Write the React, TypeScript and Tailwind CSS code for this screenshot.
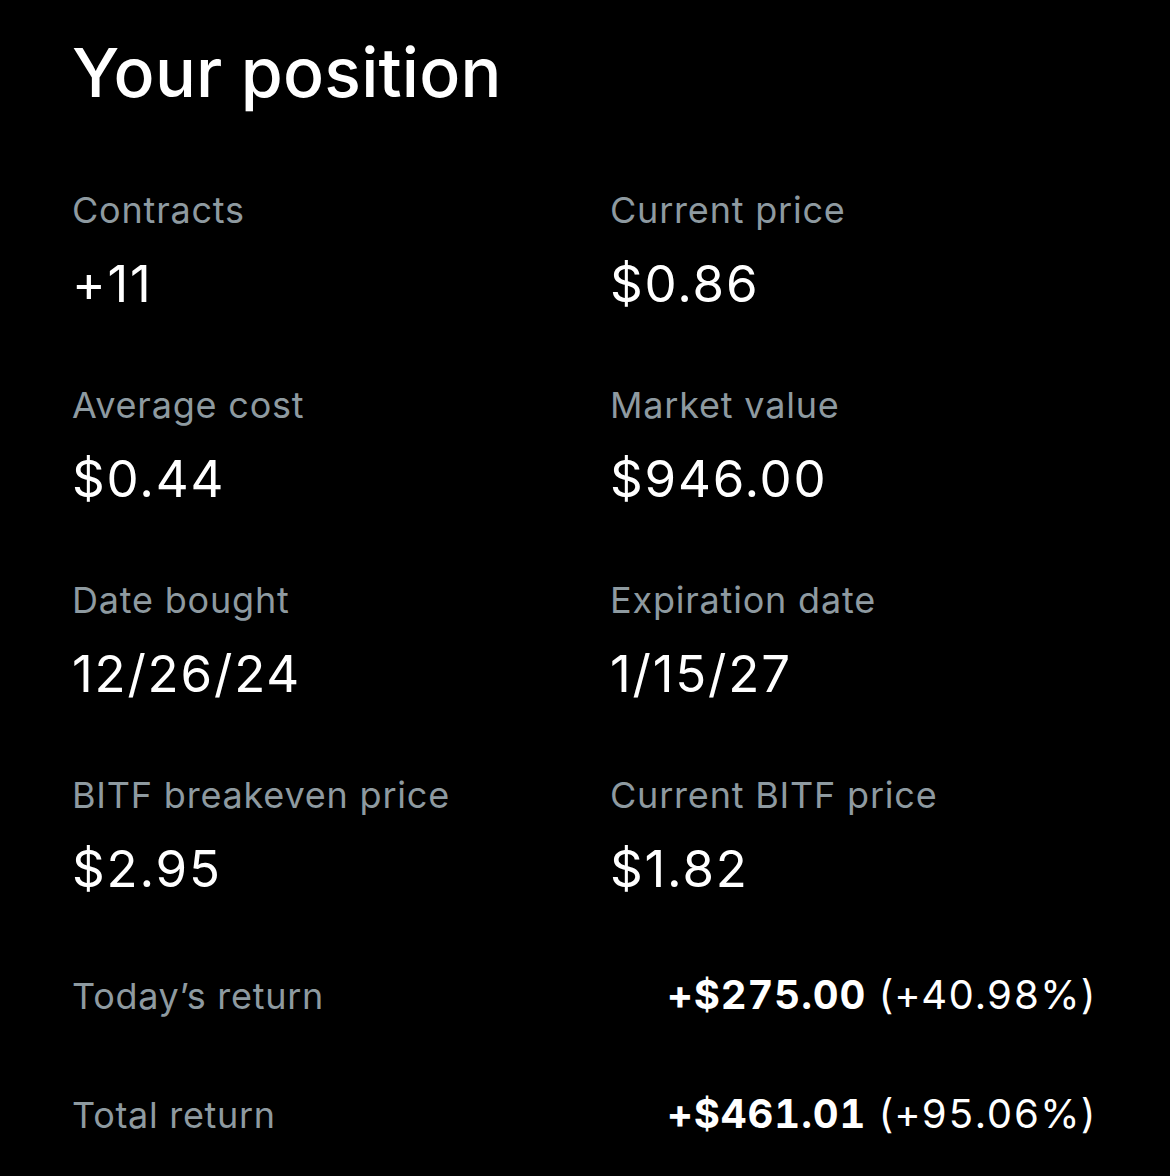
import React from "react";

const items: [string, string][] = [
  ["Contracts", "+11"],
  ["Current price", "$0.86"],
  ["Average cost", "$0.44"],
  ["Market value", "$946.00"],
  ["Date bought", "12/26/24"],
  ["Expiration date", "1/15/27"],
  ["BITF breakeven price", "$2.95"],
  ["Current BITF price", "$1.82"],
];

export default function App() {
  return (
    <div
      className="w-[1170px] min-h-[1176px] bg-black text-white pl-[72px] pr-[73px] pt-[32px]"
      style={{ fontFamily: "Inter, 'Noto Sans', sans-serif" }}
    >
      <h1 className="text-[68px] leading-[80px] font-medium tracking-[0.2px]">Your position</h1>
      <div className="grid grid-cols-[538px_1fr] gap-y-[69.5px] mt-[76px]">
        {items.map(([label, value]) => (
          <div key={label} className="flex flex-col">
            <div className="text-[36px] leading-[44px] text-[#8e9aa0] tracking-[0.8px]">{label}</div>
            <div className="text-[51px] leading-[60px] mt-[21.5px] tracking-[1.8px]">{value}</div>
          </div>
        ))}
      </div>
      <div className="flex flex-col gap-[74px] mt-[74.5px]">
        <div className="flex items-baseline justify-between">
          <span className="text-[36px] leading-[44px] text-[#8e9aa0] tracking-[0.7px]">Today’s return</span>
          <span className="text-[40px] leading-[44px] tabular-nums tracking-[0.9px]">
            <span className="font-bold">+$275.00</span> (+40.98%)
          </span>
        </div>
        <div className="flex items-baseline justify-between">
          <span className="text-[36px] leading-[44px] text-[#8e9aa0] tracking-[0.7px]">Total return</span>
          <span className="text-[40px] leading-[44px] tabular-nums tracking-[0.9px]">
            <span className="font-bold">+$461.01</span> (+95.06%)
          </span>
        </div>
      </div>
    </div>
  );
}
